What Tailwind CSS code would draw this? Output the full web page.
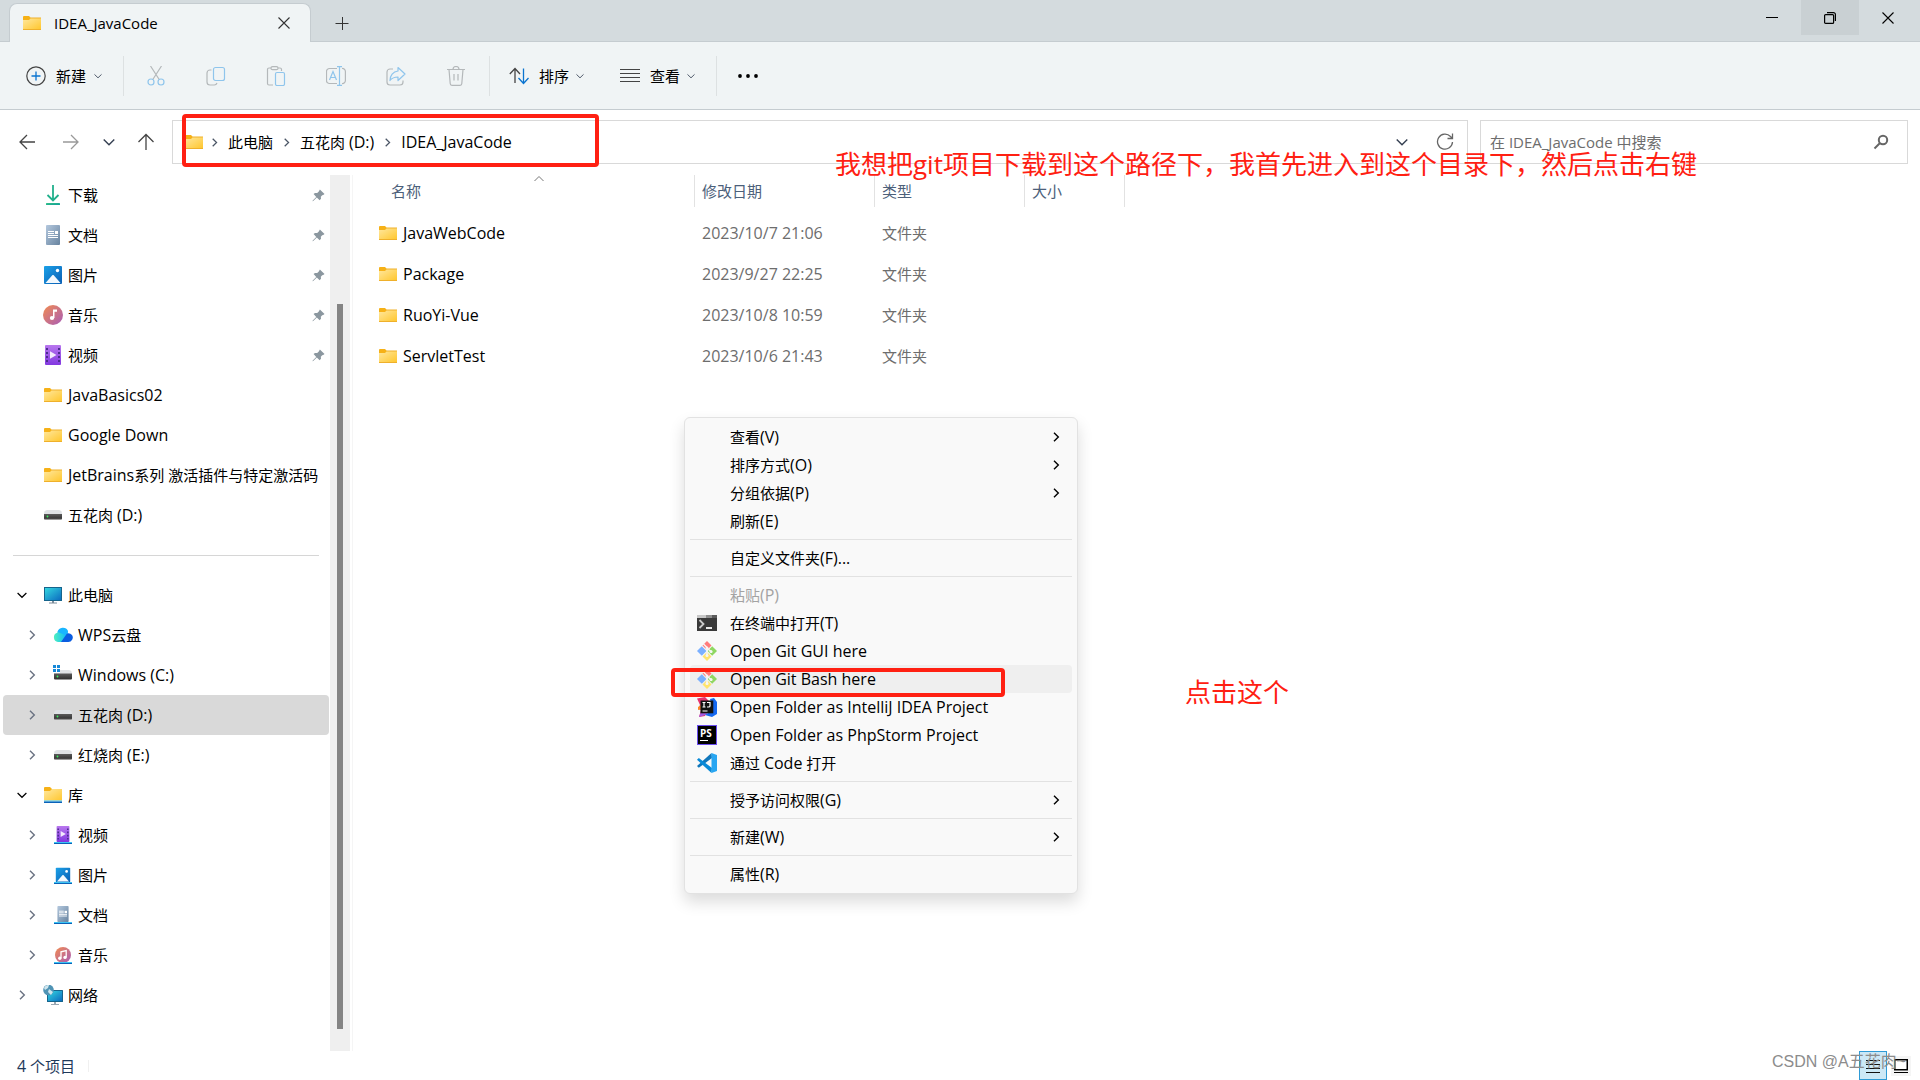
<!DOCTYPE html>
<html lang="zh-CN">
<head>
<meta charset="utf-8">
<meta name="viewport" content="width=device-width, initial-scale=1">
<title>IDEA_JavaCode</title>
<script src="https://cdn.jsdelivr.net/npm/@tailwindcss/browser@4"></script>
</head>
<body class="bg-white">
<svg class="absolute h-0 w-0" aria-hidden="true">
  <defs>
    <linearGradient id="gFolder" x1="0" y1="0" x2="1" y2="1"><stop offset="0" stop-color="#ffe8a0"/><stop offset="1" stop-color="#ffc72f"/></linearGradient>
    <linearGradient id="gDoc" x1="0" y1="0" x2="1" y2="1"><stop offset="0" stop-color="#b4c8de"/><stop offset="1" stop-color="#67839f"/></linearGradient>
    <linearGradient id="gPic" x1="0" y1="0" x2="1" y2="1"><stop offset="0" stop-color="#1ba1e8"/><stop offset="1" stop-color="#0a5eb4"/></linearGradient>
    <linearGradient id="gMusic" x1="0" y1="0" x2="1" y2="1"><stop offset="0" stop-color="#f28c50"/><stop offset="1" stop-color="#a85cb8"/></linearGradient>
    <linearGradient id="gVideo" x1="0" y1="0" x2="0" y2="1"><stop offset="0" stop-color="#b877ee"/><stop offset="1" stop-color="#8238e0"/></linearGradient>
    <linearGradient id="gScreen" x1="0" y1="0" x2="1" y2="1"><stop offset="0" stop-color="#33d6e0"/><stop offset="1" stop-color="#0c6cc0"/></linearGradient>
    <linearGradient id="gDown" x1="0" y1="0" x2="1" y2="1"><stop offset="0" stop-color="#35c486"/><stop offset="1" stop-color="#0f9b9b"/></linearGradient>
    <linearGradient id="gCloud" x1="0" y1="0" x2="1" y2="0"><stop offset="0" stop-color="#4eefc0"/><stop offset="1" stop-color="#0cb4ff"/></linearGradient>
    <linearGradient id="gDrive" x1="0" y1="0" x2="0" y2="1"><stop offset="0" stop-color="#5b5b5b"/><stop offset="1" stop-color="#2e2e2e"/></linearGradient>
  </defs>
  <symbol id="folder" viewBox="0 0 20 20"><path d="M1 4a1 1 0 0 1 1-1h5l2 2v3H1z" fill="#f6b117"/><path d="M1 7h6l2-2h9.500a.5.5 0 0 1 .5.5V16H1z" fill="url(#gFolder)"/><path d="M8.500 5H19M1 16.500h18" stroke="#efb02b"/></symbol>
  <symbol id="library" viewBox="0 0 20 20"><path d="M1 3a1 1 0 0 1 1-1h5l2 2v3H1z" fill="#f6b117"/><path d="M1 6h6l2-2h10v11.500H1z" fill="url(#gFolder)"/><path d="M1 15.500h18v1H1z" fill="#3cc4f4"/><path d="M1 16.500h18v1.500H1z" fill="#0a62b8"/></symbol>
  <symbol id="download" viewBox="0 0 20 20"><path d="M10 0v15M4.500 10l5.500 5.500L15.500 10" fill="none" stroke="#22b08c" stroke-width="1.800"/><rect x="3" y="18" width="14" height="2" rx=".5" fill="url(#gDown)"/></symbol>
  <symbol id="doc" viewBox="0 0 20 20"><rect x="3" width="14" height="20" rx="1" fill="url(#gDoc)"/><path d="M5 6.500h6M5 8.500h6M5 10.500h10M5 12.500h10" stroke="#fff" stroke-width="1.100"/><rect x="12" y="6" width="3" height="3" fill="#fff"/></symbol>
  <symbol id="pic" viewBox="0 0 20 20"><rect x="1" y="1" width="18" height="18" rx="1" fill="url(#gPic)"/><path d="M2.500 18l7-8 1 0 7 8z" fill="#f2f8fd"/><circle cx="14.500" cy="5.500" r="1.700" fill="#fff"/></symbol>
  <symbol id="music" viewBox="0 0 20 20"><circle cx="10" cy="10" r="10" fill="url(#gMusic)"/><ellipse cx="9" cy="13" rx="2.200" ry="1.900" fill="#fff"/><path d="M10 4.500h4v2.200h-2.500V13H10z" fill="#fff"/></symbol>
  <symbol id="music2" viewBox="0 0 20 20"><circle cx="10" cy="10" r="10" fill="url(#gMusic)"/><path d="M7.500 14V6l6.500-1.500V13" fill="none" stroke="#fff" stroke-width="1.600"/><circle cx="6" cy="14" r="2.100" fill="#fff"/><circle cx="12.500" cy="13" r="2.100" fill="#fff"/></symbol>
  <symbol id="video" viewBox="0 0 20 20"><rect x="2" width="16" height="20" rx="1" fill="url(#gVideo)"/><path d="M7 6.200v7.600l6.500-3.800z" fill="#f3eafd"/><path d="M3 3h2v2H3zM3 7h2v2H3zM3 11h2v2H3zM3 15h2v2H3zM15 3h2v2h-2zM15 7h2v2h-2zM15 11h2v2h-2zM15 15h2v2h-2z" fill="#4c2d8f"/></symbol>
  <symbol id="shelf" viewBox="0 0 20 20"><path d="M1 17h18v1H1z" fill="#3cc4f4"/><path d="M1 18h18v1H1z" fill="#0a62b8"/></symbol>
  <symbol id="drive" viewBox="0 0 20 20"><path d="M4 5h12a3 3 0 0 1 2.500 1.500L19 9H1l.5-2.500A3 3 0 0 1 4 5z" fill="#dfe2e5"/><path d="M1 9h18v4.500a1 1 0 0 1-1 1H2a1 1 0 0 1-1-1z" fill="url(#gDrive)"/><path d="M1.500 14.300h17" stroke="#9a9a9a" stroke-width=".8"/><circle cx="4.500" cy="11.500" r=".9" fill="#3bf05e"/></symbol>
  <symbol id="windrive" viewBox="0 0 20 20"><path d="M7 5h9a3 3 0 0 1 2.500 1.500L19 9H1V8h6z" fill="#dfe2e5"/><path d="M1 8.500h18v5a1 1 0 0 1-1 1H2a1 1 0 0 1-1-1z" fill="url(#gDrive)"/><circle cx="4.500" cy="11.500" r=".9" fill="#3bf05e"/><path d="M0 0h3v3H0zM4 0h3v3H4zM0 4h3v3H0zM4 4h3v3H4z" fill="#1688d8"/></symbol>
  <symbol id="pc" viewBox="0 0 20 20"><rect x="1" y="2" width="18" height="14" fill="#15648c"/><rect x="2" y="3" width="16" height="12" fill="url(#gScreen)"/><path d="M9 16h2v1.500h3v1H6v-1h3z" fill="#7d8c9a"/></symbol>
  <symbol id="cloud" viewBox="0 0 20 20"><path d="M5 17a4.800 4.800 0 0 1-.8-9.300A6 6 0 0 1 15 6.500L12 17z" fill="url(#gCloud)"/><path d="M4.500 7a5.600 5.600 0 0 1 10.500-1l-1 5-4-2z" fill="#19b5ff"/><path d="M8 17l6-8.500A5 5 0 0 1 19 10a4.500 4.500 0 0 1-4 7z" fill="#0a5ce0"/></symbol>
  <symbol id="network" viewBox="0 0 20 20"><rect x="4" y="5" width="16" height="12" rx=".5" fill="#15648c"/><rect x="5" y="6" width="14" height="10" fill="url(#gScreen)"/><path d="M11 17h2v2h3v1H8v-1h3z" fill="#9aa7b2"/><circle cx="5.500" cy="5" r="5.300" fill="#4f93b4"/><path d="M1 3a5 5 0 0 1 5-3l-1 3-3 2zM6 4l4 3-2 3-3-3z" fill="#cfe6ee"/></symbol>
  <symbol id="pin" viewBox="0 0 14 14"><path d="M8.500.5l5 5-1.500 1-1 .2-1.500 1.600.2 2.200-1.500 1.600-3-3L1.300 13 .5 13.200l.3-.9L4.600 8.500l-2.900-3 1.500-1.300 2.400.2L7.300 2.800z" fill="#8b979f"/></symbol>
  <symbol id="right" viewBox="0 0 10 10"><path d="M3 .8L7.300 5 3 9.200" fill="none" stroke="currentColor" stroke-width="1.400"/></symbol>
  <symbol id="down" viewBox="0 0 10 10"><path d="M.6 3L5 7.300 9.400 3" fill="none" stroke="currentColor" stroke-width="1.200"/></symbol>
  <symbol id="git" viewBox="0 0 20 20"><path d="M10 0l4.500 4.500L10 9 5.500 4.500z" fill="#ff7b7b"/><path d="M4.800 5.200L9.500 10l-4.700 4.800L0 10z" fill="#7bb0ff"/><path d="M15.200 5.200L20 10l-4.800 4.800L10.500 10z" fill="#8fd762"/><path d="M10 11l4.500 4.500L10 20l-4.500-4.500z" fill="#ffe46e"/><path d="M6.500 3l3.500 3.500V15M10 7l5 4.500" fill="none" stroke="#f6f6f6" stroke-width="1.500"/><circle cx="10" cy="14.500" r="1.500" fill="#f6f6f6"/><circle cx="14" cy="10.500" r="1.500" fill="#f6f6f6"/><circle cx="10" cy="7" r="1.500" fill="#f6f6f6"/></symbol>
</svg>

<div class="relative flex min-h-screen flex-col overflow-hidden font-['Open_Sans','Noto_Sans_CJK_SC',sans-serif] text-[15px] leading-5 text-black">

  <header>
    <div class="flex h-[42px] items-end border-b border-[#c5ccd0] bg-[#d4dbde]">
      <div class="-mb-px ml-[9px] flex h-[39px] w-[302px] items-center rounded-t-lg border border-b-0 border-[#c5ccd0] bg-[#f0f4f5] pl-3 pr-[18px]">
        <svg class="h-5 w-5"><use href="#folder"/></svg>
        <span class="ml-3 flex-1">IDEA_JavaCode</span>
        <button aria-label="关闭标签页"><svg class="h-4 w-4" viewBox="0 0 16 16"><path d="M2.500 2.500l11 11M13.500 2.500l-11 11" stroke="#333" stroke-width="1.100"/></svg></button>
      </div>
      <button class="mb-[10px] ml-[23px]" aria-label="新标签页"><svg class="h-4 w-4" viewBox="0 0 16 16"><path d="M1.500 8.500h13M8.500 2v13" stroke="#333"/></svg></button>
      <div class="ml-auto mr-[3px] flex self-start">
        <button class="grid h-[35px] w-[58px] place-items-center" aria-label="最小化"><svg class="h-3 w-3" viewBox="0 0 12 12"><path d="M0 5.500h12" stroke="#000"/></svg></button>
        <button class="grid h-[35px] w-[58px] place-items-center bg-[#c9d0d3]" aria-label="还原"><svg class="h-3 w-3" viewBox="0 0 12 12"><g fill="none" stroke="#000" stroke-width="1.200"><rect x=".6" y="2.600" width="9" height="8.800" rx="1"/><path d="M3 .6h6.400a2 2 0 0 1 2 2V9"/></g></svg></button>
        <button class="grid h-[35px] w-[58px] place-items-center" aria-label="关闭"><svg class="h-3 w-3" viewBox="0 0 12 12"><path d="M.5.5l11 11M11.500.5l-11 11" stroke="#000" stroke-width="1.100"/></svg></button>
      </div>
    </div>

    <div class="flex h-[68px] items-center border-b border-[#c5ccd0] bg-[#f0f4f5]">
      <button class="ml-[26px] flex items-center">
        <svg class="h-5 w-5" viewBox="0 0 20 20"><circle cx="10" cy="10" r="9.200" fill="none" stroke="#444" stroke-width="1.200"/><path d="M5.500 10h9M10 5.500v9" stroke="#0a74d0" stroke-width="1.300"/></svg>
        <span class="ml-[10px]">新建</span><svg class="ml-2 h-2 w-2 text-gray-600"><use href="#down"/></svg>
      </button>
      <div class="ml-[21px] h-10 w-px bg-[#dde1e2]"></div>
      <div class="ml-[22px] flex items-center gap-10">
        <button disabled aria-label="剪切"><svg class="block h-5 w-5" viewBox="0 0 20 20" fill="none" stroke="#b4b8ba" stroke-width="1.200"><path d="M4.500 0l8.700 13.500M15.500 0L6.800 13.500"/><g stroke="#8fc5ec"><circle cx="5" cy="16" r="3"/><circle cx="15" cy="16" r="3"/></g></svg></button>
        <button disabled aria-label="复制"><svg class="block h-5 w-5" viewBox="0 0 20 20" fill="none" stroke="#b4b8ba" stroke-width="1.200"><path d="M5.500 4H4a3 3 0 0 0-3 3v9a3 3 0 0 0 3 3h4a3 3 0 0 0 3-2"/><rect x="7.500" y="1.500" width="11" height="13" rx="2" stroke="#8fc5ec"/></svg></button>
        <button disabled aria-label="粘贴"><svg class="block h-5 w-5" viewBox="0 0 20 20" fill="none" stroke="#b4b8ba" stroke-width="1.200"><path d="M7 19H3a1.500 1.500 0 0 1-1.500-1.500V3.500A1.500 1.500 0 0 1 3 2h2m7 0h2a1.500 1.500 0 0 1 1.500 1.500V5"/><rect x="5" y=".7" width="7" height="3" rx="1.500"/><rect x="9.500" y="6.500" width="9" height="13" rx="1.500" stroke="#8fc5ec"/></svg></button>
        <button disabled aria-label="重命名"><svg class="block h-5 w-5" viewBox="0 0 20 20" fill="none" stroke="#b4b8ba" stroke-width="1.200"><path d="M11 2.500H3.500a3 3 0 0 0-3 3v9a3 3 0 0 0 3 3H11m5-15a3 3 0 0 1 3.400 3v9a3 3 0 0 1-3.400 3"/><path d="M3.500 14L7 5.500 10.500 14M4.600 11.500h4.800M11 .6h5M11 19.400h5M13.500.6v19" stroke="#8fc5ec"/></svg></button>
        <button disabled aria-label="共享"><svg class="block h-5 w-5" viewBox="0 0 20 20" fill="none" stroke="#b4b8ba" stroke-width="1.200"><path d="M7 3H4a3 3 0 0 0-3 3v10a3 3 0 0 0 3 3h10a3 3 0 0 0 3-3v-1.500"/><path d="M12 1.500L19 8l-7 6.500V11c-4 0-6 1-8 3.500 0-5 3-9 8-9.500z" stroke="#8fc5ec" stroke-linejoin="round"/></svg></button>
        <button disabled aria-label="删除"><svg class="block h-5 w-5" viewBox="0 0 20 20" fill="none" stroke="#b4b8ba" stroke-width="1.200"><path d="M1 3.500h18M7 3.500a3 3 0 0 1 6 0M3 3.500l1.200 14A2 2 0 0 0 6 19.400h8a2 2 0 0 0 1.800-1.900L17 3.500M8 8v6.500M12 8v6.500"/></svg></button>
      </div>
      <div class="ml-[23px] h-10 w-px bg-[#dde1e2]"></div>
      <button class="ml-[19px] flex items-center">
        <svg class="h-5 w-5" viewBox="0 0 20 20" fill="none" stroke-width="1.300"><path d="M6 17V2.500M.8 8L6 2.500 11 8" stroke="#444"/><path d="M14.500 2.500v15M9.500 12l5 5.500 5-5.500" stroke="#0a74d0"/></svg>
        <span class="ml-[10px]">排序</span><svg class="ml-[7px] h-2 w-2 text-gray-600"><use href="#down"/></svg>
      </button>
      <button class="ml-9 flex items-center">
        <svg class="h-5 w-5" viewBox="0 0 20 20"><path d="M0 3.500h20M0 7.500h20M0 11.500h20M0 15.500h20" stroke="#444"/></svg>
        <span class="ml-[10px]">查看</span><svg class="ml-[7px] h-2 w-2 text-gray-600"><use href="#down"/></svg>
      </button>
      <div class="ml-[21px] h-10 w-px bg-[#dde1e2]"></div>
      <button class="ml-[21px]" aria-label="更多"><svg class="block h-5 w-5" viewBox="0 0 20 20"><circle cx="2" cy="10" r="1.900"/><circle cx="10" cy="10" r="1.900"/><circle cx="18" cy="10" r="1.900"/></svg></button>
    </div>

    <div class="flex h-[65px] items-start pl-[19px] pr-3 pt-[10px]">
      <div class="flex h-11 w-[153px] items-center">
        <button aria-label="后退"><svg class="block h-4 w-4" viewBox="0 0 16 16" fill="none" stroke="#444" stroke-width="1.300"><path d="M16 8H1M8 1L1 8l7 7"/></svg></button>
        <button class="ml-7" disabled aria-label="前进"><svg class="block h-4 w-4" viewBox="0 0 16 16" fill="none" stroke="#999" stroke-width="1.300"><path d="M0 8h15M8 1l7 7-7 7"/></svg></button>
        <button class="ml-6" aria-label="最近浏览"><svg class="block h-3 w-3 text-gray-700"><use href="#down"/></svg></button>
        <button class="ml-[22px]" aria-label="上移"><svg class="block h-[18px] w-[18px]" viewBox="0 0 18 18" fill="none" stroke="#444" stroke-width="1.300"><path d="M9 17V1.500M1.500 9L9 1.500 16.500 9"/></svg></button>
      </div>
      <nav class="flex h-11 flex-1 items-center border border-[#d9d9d9] pl-[11px] pr-[13px]" aria-label="地址栏">
        <svg class="h-5 w-5"><use href="#folder"/></svg>
        <svg class="ml-[6px] h-[9px] w-[9px] text-gray-600"><use href="#right"/></svg>
        <a href="#" class="ml-[9px]">此电脑</a>
        <svg class="ml-[9px] h-[9px] w-[9px] text-gray-600"><use href="#right"/></svg>
        <a href="#" class="ml-[9px]">五花肉 <span class="text-base">(D:)</span></a>
        <svg class="ml-[9px] h-[9px] w-[9px] text-gray-600"><use href="#right"/></svg>
        <a href="#" class="ml-[9px] text-base">IDEA_JavaCode</a>
        <button class="ml-auto" aria-label="以前的位置"><svg class="block h-3 w-3 text-gray-700"><use href="#down"/></svg></button>
        <button class="ml-7" aria-label="刷新"><svg class="block h-[18px] w-[18px]" viewBox="0 0 18 18" fill="none" stroke="#666" stroke-width="1.300"><path d="M16.500 9a7.500 7.500 0 1 1-2-5.500L16 5M16.500.5V5.500h-5"/></svg></button>
      </nav>
      <label class="ml-3 flex h-11 w-[428px] items-center border border-[#d9d9d9] pl-[9px] pr-[18px]">
        <input type="search" aria-label="搜索" placeholder="在 IDEA_JavaCode 中搜索" class="min-w-0 flex-1 text-[15px] outline-none placeholder:text-[#6d6d6d]">
        <svg class="h-4 w-4" viewBox="0 0 16 16" fill="none" stroke="#666" stroke-width="2"><circle cx="10" cy="6" r="4.200"/><path d="M7 9l-5.500 5.500"/></svg>
      </label>
    </div>
  </header>

  <main class="flex flex-1">
    <aside class="w-[330px] whitespace-nowrap">
      <ul>
        <li class="flex h-10 items-center gap-[5px] pl-[43px] pr-[5px]"><svg class="h-5 w-5"><use href="#download"/></svg><span>下载</span><svg class="ml-auto h-[13px] w-[13px]"><use href="#pin"/></svg></li>
        <li class="flex h-10 items-center gap-[5px] pl-[43px] pr-[5px]"><svg class="h-5 w-5"><use href="#doc"/></svg><span>文档</span><svg class="ml-auto h-[13px] w-[13px]"><use href="#pin"/></svg></li>
        <li class="flex h-10 items-center gap-[5px] pl-[43px] pr-[5px]"><svg class="h-5 w-5"><use href="#pic"/></svg><span>图片</span><svg class="ml-auto h-[13px] w-[13px]"><use href="#pin"/></svg></li>
        <li class="flex h-10 items-center gap-[5px] pl-[43px] pr-[5px]"><svg class="h-5 w-5"><use href="#music"/></svg><span>音乐</span><svg class="ml-auto h-[13px] w-[13px]"><use href="#pin"/></svg></li>
        <li class="flex h-10 items-center gap-[5px] pl-[43px] pr-[5px]"><svg class="h-5 w-5"><use href="#video"/></svg><span>视频</span><svg class="ml-auto h-[13px] w-[13px]"><use href="#pin"/></svg></li>
        <li class="flex h-10 items-center gap-[5px] pl-[43px]"><svg class="h-5 w-5"><use href="#folder"/></svg><span class="text-base">JavaBasics02</span></li>
        <li class="flex h-10 items-center gap-[5px] pl-[43px]"><svg class="h-5 w-5"><use href="#folder"/></svg><span class="text-base">Google Down</span></li>
        <li class="flex h-10 items-center gap-[5px] pl-[43px]"><svg class="h-5 w-5 shrink-0"><use href="#folder"/></svg><span><span class="text-base">JetBrains</span>系列 激活插件与特定激活码</span></li>
        <li class="flex h-10 items-center gap-[5px] pl-[43px]"><svg class="h-5 w-5"><use href="#drive"/></svg><span>五花肉 <span class="text-base">(D:)</span></span></li>
      </ul>
      <div class="flex h-10 items-center pl-[13px] pr-[11px]"><hr class="w-full border-[#d6d6d6]"></div>
      <ul>
        <li class="flex h-10 items-center gap-[5px] pl-[17px]"><svg class="mr-[11px] h-[10px] w-[10px]"><use href="#down"/></svg><svg class="h-5 w-5"><use href="#pc"/></svg><span>此电脑</span></li>
        <li class="flex h-10 items-center gap-[5px] pl-[27px]"><svg class="mr-[11px] h-[10px] w-[10px] text-gray-500"><use href="#right"/></svg><svg class="h-5 w-5"><use href="#cloud"/></svg><span><span class="text-base">WPS</span>云盘</span></li>
        <li class="flex h-10 items-center gap-[5px] pl-[27px]"><svg class="mr-[11px] h-[10px] w-[10px] text-gray-500"><use href="#right"/></svg><svg class="h-5 w-5"><use href="#windrive"/></svg><span class="text-base">Windows (C:)</span></li>
        <li class="ml-[3px] mr-px flex h-10 items-center gap-[5px] rounded-sm bg-[#d9d9d9] pl-6"><svg class="mr-[11px] h-[10px] w-[10px] text-gray-500"><use href="#right"/></svg><svg class="h-5 w-5"><use href="#drive"/></svg><span>五花肉 <span class="text-base">(D:)</span></span></li>
        <li class="flex h-10 items-center gap-[5px] pl-[27px]"><svg class="mr-[11px] h-[10px] w-[10px] text-gray-500"><use href="#right"/></svg><svg class="h-5 w-5"><use href="#drive"/></svg><span>红烧肉 <span class="text-base">(E:)</span></span></li>
        <li class="flex h-10 items-center gap-[5px] pl-[17px]"><svg class="mr-[11px] h-[10px] w-[10px]"><use href="#down"/></svg><svg class="h-5 w-5"><use href="#library"/></svg><span>库</span></li>
        <li class="flex h-10 items-center gap-[5px] pl-[27px]"><svg class="mr-[11px] h-[10px] w-[10px] text-gray-500"><use href="#right"/></svg><svg class="h-5 w-5" viewBox="0 0 20 20"><use href="#video" x="2" y="1" width="16" height="16"/><use href="#shelf" width="20" height="20"/></svg><span>视频</span></li>
        <li class="flex h-10 items-center gap-[5px] pl-[27px]"><svg class="mr-[11px] h-[10px] w-[10px] text-gray-500"><use href="#right"/></svg><svg class="h-5 w-5" viewBox="0 0 20 20"><use href="#pic" x="2" y="2" width="16" height="16"/><use href="#shelf" width="20" height="20"/></svg><span>图片</span></li>
        <li class="flex h-10 items-center gap-[5px] pl-[27px]"><svg class="mr-[11px] h-[10px] w-[10px] text-gray-500"><use href="#right"/></svg><svg class="h-5 w-5" viewBox="0 0 20 20"><use href="#doc" x="2" y="1" width="16" height="16"/><use href="#shelf" width="20" height="20"/></svg><span>文档</span></li>
        <li class="flex h-10 items-center gap-[5px] pl-[27px]"><svg class="mr-[11px] h-[10px] w-[10px] text-gray-500"><use href="#right"/></svg><svg class="h-5 w-5" viewBox="0 0 20 20"><use href="#music2" x="2" y="2" width="16" height="16"/><use href="#shelf" width="20" height="20"/></svg><span>音乐</span></li>
        <li class="flex h-10 items-center gap-[5px] pl-[17px]"><svg class="mr-[11px] h-[10px] w-[10px] text-gray-500"><use href="#right"/></svg><svg class="h-5 w-5"><use href="#network"/></svg><span>网络</span></li>
      </ul>
    </aside>
    <div class="flex w-5 flex-col items-center bg-[#efefef] pb-[22px] pt-[129px]"><div class="w-[6px] flex-1 bg-[#848484]"></div></div>
    <section class="ml-[2px] flex-1 border-l border-[#f5f5f5]">
      <table class="table-fixed text-left">
        <thead class="text-[#4c607a]">
          <tr class="h-[37px] align-top">
            <th class="w-[342px] p-0 font-normal"><div class="relative h-8 border-r border-[#e2e2e2] pl-[38px] leading-8">名称<svg class="absolute left-[181px] top-0 h-2 w-[10px]" viewBox="0 0 10 8"><path d="M.5 6L5 1.500 9.500 6" fill="none" stroke="#777"/></svg></div></th>
            <th class="w-[180px] p-0 font-normal"><div class="h-8 border-r border-[#e2e2e2] pl-[7px] leading-8">修改日期</div></th>
            <th class="w-[150px] p-0 font-normal"><div class="h-8 border-r border-[#e2e2e2] pl-[7px] leading-8">类型</div></th>
            <th class="w-[100px] p-0 font-normal"><div class="h-8 border-r border-[#e2e2e2] pl-[7px] leading-8">大小</div></th>
          </tr>
        </thead>
        <tbody class="text-[#6d6d6d]">
          <tr class="h-[41px]"><td class="p-0"><a href="#" class="flex items-center gap-[5px] pl-[25px] text-base text-black"><svg class="h-5 w-5"><use href="#folder"/></svg>JavaWebCode</a></td><td class="p-0 pl-[7px] text-base">2023/10/7 21:06</td><td class="p-0 pl-[7px]">文件夹</td><td></td></tr>
          <tr class="h-[41px]"><td class="p-0"><a href="#" class="flex items-center gap-[5px] pl-[25px] text-base text-black"><svg class="h-5 w-5"><use href="#folder"/></svg>Package</a></td><td class="p-0 pl-[7px] text-base">2023/9/27 22:25</td><td class="p-0 pl-[7px]">文件夹</td><td></td></tr>
          <tr class="h-[41px]"><td class="p-0"><a href="#" class="flex items-center gap-[5px] pl-[25px] text-base text-black"><svg class="h-5 w-5"><use href="#folder"/></svg>RuoYi-Vue</a></td><td class="p-0 pl-[7px] text-base">2023/10/8 10:59</td><td class="p-0 pl-[7px]">文件夹</td><td></td></tr>
          <tr class="h-[41px]"><td class="p-0"><a href="#" class="flex items-center gap-[5px] pl-[25px] text-base text-black"><svg class="h-5 w-5"><use href="#folder"/></svg>ServletTest</a></td><td class="p-0 pl-[7px] text-base">2023/10/6 21:43</td><td class="p-0 pl-[7px]">文件夹</td><td></td></tr>
        </tbody>
      </table>
    </section>
  </main>

  <footer class="flex h-[29px] items-center pl-[17px] pr-[9px] text-[#1e395b]">
    <span><span class="text-base">4</span> 个项目</span>
    <div class="ml-[13px] h-3 w-px bg-[#f0f0f0]"></div>
    <button class="ml-auto grid h-[29px] w-7 place-items-center border border-[#2f9bd6] bg-[#cce8f6]" aria-label="详细信息"><svg class="h-4 w-4" viewBox="0 0 16 16"><path d="M1 2.500h14M1 6.500h14M1 10.500h14M1 14.500h14" stroke="#111"/></svg></button>
    <button class="ml-1 grid h-5 w-5 place-items-center bg-[#f5f5f5]" aria-label="大缩略图"><svg class="h-[14px] w-[14px]" viewBox="0 0 14 14"><rect x=".75" y=".75" width="12.500" height="10" fill="#fff" stroke="#000" stroke-width="1.500"/><path d="M0 13.500h14" stroke="#000"/></svg></button>
  </footer>

  <!-- Context menu -->
  <div role="menu" class="absolute left-[684px] top-[417px] w-[394px] rounded-md border border-[#e2e2e2] bg-[#f9f9f9] p-[5px] shadow-[0_8px_16px_rgba(0,0,0,0.14)]">
    <button role="menuitem" class="flex h-7 w-full items-center pl-10 pr-[11px]"><span>查看<span class="text-base">(V)</span></span><svg class="ml-auto h-[10px] w-[10px]"><use href="#right"/></svg></button>
    <button role="menuitem" class="flex h-7 w-full items-center pl-10 pr-[11px]"><span>排序方式<span class="text-base">(O)</span></span><svg class="ml-auto h-[10px] w-[10px]"><use href="#right"/></svg></button>
    <button role="menuitem" class="flex h-7 w-full items-center pl-10 pr-[11px]"><span>分组依据<span class="text-base">(P)</span></span><svg class="ml-auto h-[10px] w-[10px]"><use href="#right"/></svg></button>
    <button role="menuitem" class="flex h-7 w-full items-center pl-10"><span>刷新<span class="text-base">(E)</span></span></button>
    <hr class="my-1 border-[#e2e2e2]">
    <button role="menuitem" class="flex h-7 w-full items-center pl-10"><span>自定义文件夹<span class="text-base">(F)...</span></span></button>
    <hr class="my-1 border-[#e2e2e2]">
    <button role="menuitem" disabled class="flex h-7 w-full items-center pl-10 text-[#a3a3a3]"><span>粘贴<span class="text-base">(P)</span></span></button>
    <button role="menuitem" class="flex h-7 w-full items-center gap-[13px] pl-[7px]"><svg class="h-5 w-5" viewBox="0 0 20 20"><path d="M0 2h20v16H0z" fill="#3a3a3a"/><path d="M0 2h9v3H0z" fill="#c8c8c8"/><path d="M9 2h6v3H9z" fill="#8f8f8f"/><path d="M15 2h5v3h-5z" fill="#5c5c5c"/><path d="M2.500 7l4 4-4 4" fill="none" stroke="#ccc" stroke-width="1.800"/><path d="M9 15h6" stroke="#fff" stroke-width="1.800"/></svg><span>在终端中打开<span class="text-base">(T)</span></span></button>
    <button role="menuitem" class="flex h-7 w-full items-center gap-[13px] pl-[7px] text-base"><svg class="h-5 w-5"><use href="#git"/></svg>Open Git GUI here</button>
    <button role="menuitem" class="flex h-7 w-full items-center gap-[13px] rounded bg-[#efefef] pl-[7px] text-base"><svg class="h-5 w-5"><use href="#git"/></svg>Open Git Bash here</button>
    <button role="menuitem" class="flex h-7 w-full items-center gap-[13px] pl-[7px] text-base"><svg class="h-5 w-5" viewBox="0 0 20 20"><path d="M0 1.500L8 0l5 5-5 14-6 1 2-7-3-1 2-4z" fill="#e6336e"/><path d="M1 10l3-2 1 4-4 1z" fill="#fb8a26"/><path d="M2 20l3-8 6 5z" fill="#a259e0"/><path d="M13 2l4-1 3 4v12l-5 3-7-2 8-5z" fill="#1468f0"/><path d="M3.500 3.500h12.800v12.800H3.500z" fill="#111"/><path d="M5.500 5.500h3M7 5.500V10M5.500 10h3M10 5.500h3V9q0 1-1.500 1H10M5.500 14h5" fill="none" stroke="#fff" stroke-width="1.200"/></svg>Open Folder as IntelliJ IDEA Project</button>
    <button role="menuitem" class="flex h-7 w-full items-center gap-[13px] pl-[7px] text-base"><span class="h-5 w-5 border border-[#6a4df0] bg-black pl-[2px] text-left text-[10px] leading-[14px] font-bold text-white" aria-hidden="true">PS<span class="block h-px w-2 bg-white"></span></span>Open Folder as PhpStorm Project</button>
    <button role="menuitem" class="flex h-7 w-full items-center gap-[13px] pl-[7px]"><svg class="h-5 w-5" viewBox="0 0 20 20"><path d="M14.500 0L0 13l1.800 1.800L15 5z" fill="#1177bb"/><path d="M0 6.800L1.800 5 15 15l-.5 5z" fill="#0a8ad8"/><path d="M14.500 0L20 2v16l-5.500 2V0z" fill="#28a6f2"/></svg><span>通过 <span class="text-base">Code</span> 打开</span></button>
    <hr class="my-1 border-[#e2e2e2]">
    <button role="menuitem" class="flex h-7 w-full items-center pl-10 pr-[11px]"><span>授予访问权限<span class="text-base">(G)</span></span><svg class="ml-auto h-[10px] w-[10px]"><use href="#right"/></svg></button>
    <hr class="my-1 border-[#e2e2e2]">
    <button role="menuitem" class="flex h-7 w-full items-center pl-10 pr-[11px]"><span>新建<span class="text-base">(W)</span></span><svg class="ml-auto h-[10px] w-[10px]"><use href="#right"/></svg></button>
    <hr class="my-1 border-[#e2e2e2]">
    <button role="menuitem" class="flex h-7 w-full items-center pl-10"><span>属性<span class="text-base">(R)</span></span></button>
  </div>

  <!-- Annotations -->
  <div class="pointer-events-none absolute left-[182px] top-[114px] h-[53px] w-[417px] rounded border-4 border-[#ff2012]"></div>
  <div class="pointer-events-none absolute left-[671px] top-[668px] h-[29px] w-[334px] rounded border-4 border-[#ff2012]"></div>
  <p class="pointer-events-none absolute left-[835px] top-[148px] text-[26px] leading-8 whitespace-nowrap text-[#ff2012]">我想把git项目下载到这个路径下，我首先进入到这个目录下，然后点击右键</p>
  <p class="pointer-events-none absolute left-[1185px] top-[676px] text-[26px] leading-8 whitespace-nowrap text-[#ff2012]">点击这个</p>
  <p class="pointer-events-none absolute right-[14px] bottom-[6px] font-['Liberation_Sans','Noto_Sans_CJK_SC',sans-serif] text-base leading-6 whitespace-nowrap text-[#8c8c8c]">CSDN @A五花肉~</p>
</div>
</body>
</html>
